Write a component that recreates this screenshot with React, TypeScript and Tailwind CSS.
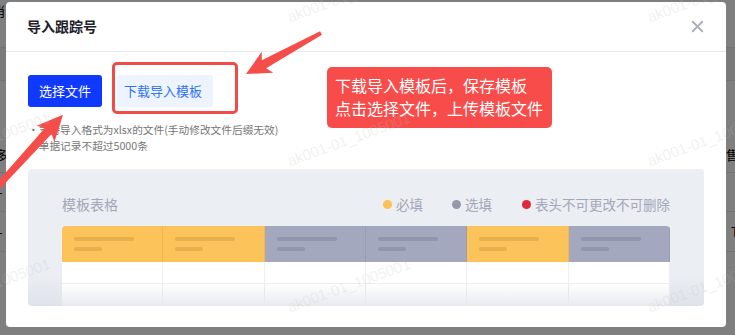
import { X } from 'lucide-react'

const headerCols = ['yellow', 'yellow', 'gray', 'gray', 'yellow', 'gray']

const watermarks = [
  'left-[-68px] top-[6px]',
  'left-[292px] top-[6px]',
  'left-[652px] top-[6px]',
  'left-[-68px] top-[150px]',
  'left-[292px] top-[150px]',
  'left-[652px] top-[150px]',
  'left-[-68px] top-[296px]',
  'left-[292px] top-[296px]',
  'left-[652px] top-[296px]',
]

function Arrows() {
  return (
    <svg className="pointer-events-none absolute inset-0" width="735" height="335" viewBox="0 0 735 335">
      {/* arrow pointing at the download button */}
      <g transform="translate(321 33) rotate(151.3)">
        <polygon points="0,-2 65,-4.5 61,-12 85.5,0 61,12 65,4.5 0,2" fill="#f54d4a" />
      </g>
      {/* arrow pointing at the select button */}
      <g transform="translate(-11 196) rotate(-47.7)">
        <polygon points="0,-3 88,-4.5 84,-12 110,0 84,12 88,4.5 0,3" fill="#f54d4a" />
      </g>
    </svg>
  )
}

function TemplatePreview() {
  return (
    <div className="mt-[15px] h-[137px] overflow-hidden rounded-[4px] bg-[linear-gradient(to_bottom,#ebeef3_78%,#dee2ea)] px-[34px] pt-[25px]">
      <div className="flex h-[20px] items-center justify-between">
        <span className="text-[14px] text-[#a3a7b7]">模板表格</span>
        <div className="flex items-center text-[13.5px] text-[#a3a7b7]">
          <span className="h-[9px] w-[9px] rounded-full bg-[#fcc253]" />
          <span className="ml-[4px]">必填</span>
          <span className="ml-[29px] h-[9px] w-[9px] rounded-full bg-[#9598ab]" />
          <span className="ml-[4px]">选填</span>
          <span className="ml-[30px] h-[9px] w-[9px] rounded-full bg-[#e0283c]" />
          <span className="ml-[4px]">表头不可更改不可删除</span>
        </div>
      </div>
      <div className="mt-[12px] overflow-hidden rounded-t-[4px]">
        <div className="grid h-[36px] grid-cols-6">
          {headerCols.map((c, i) => (
            <div
              key={i}
              className={
                c === 'yellow'
                  ? 'border-r border-[#f0b950] bg-[#fcc35a] pl-[12px] pt-[11px]'
                  : 'border-r border-[#9a9eb4] bg-[#a4a8be] pl-[12px] pt-[11px]'
              }
            >
              <div className={c === 'yellow' ? 'h-[4px] w-[60px] rounded-full bg-[#e6b04f]' : 'h-[4px] w-[60px] rounded-full bg-[#9296ac]'} />
              <div className={c === 'yellow' ? 'mt-[6px] h-[4px] w-[28px] rounded-full bg-[#e6b04f]' : 'mt-[6px] h-[4px] w-[28px] rounded-full bg-[#9296ac]'} />
            </div>
          ))}
        </div>
        <div className="grid h-[22px] grid-cols-6 border-b border-[#eeeeee] bg-white">
          {headerCols.map((_, i) => (
            <div key={i} className="border-r border-[#eeeeee]" />
          ))}
        </div>
        <div className="grid h-[22px] grid-cols-6 bg-gradient-to-b from-white to-[#e9eaef]">
          {headerCols.map((_, i) => (
            <div key={i} className="border-r border-[#e9e9ec]" />
          ))}
        </div>
      </div>
    </div>
  )
}

export default function App() {
  return (
    <div className="relative h-[335px] w-[735px] overflow-hidden bg-white font-['Noto_Sans_CJK_SC',sans-serif]">
      {/* page behind the dialog */}
      <div className="flex flex-col text-[13px] text-black">
        <div className="flex h-[48px] justify-between border-b border-[#e6e6e6]">
          <span className="ml-[-7px] mt-[1px]">肖</span>
          <span />
        </div>
        <div className="h-[33px] border-b border-[#e6e6e6] bg-[#f4f5f7]" />
        <div className="flex h-[92px] items-end justify-between border-b border-[#e6e6e6] pb-[8px]">
          <span className="ml-[-5px]">多</span>
          <span className="mr-[-4px]">售</span>
        </div>
        <div className="flex h-[39px] items-center border-b border-[#e6e6e6]">
          <span className="ml-[-2px]">-</span>
        </div>
        <div className="flex h-[40px] items-center justify-between border-b border-[#e6e6e6]">
          <span className="ml-[-2px]">-</span>
          <span className="mr-[-26px]">Total</span>
        </div>
      </div>
      <div className="absolute inset-0 bg-black/50" />

      {/* dialog */}
      <div className="absolute left-[6px] top-[2px] h-[325px] w-[720px] rounded-[4px] bg-white">
        <div className="flex h-[50px] items-center justify-between border-b border-[#e6e8ec] pl-[21px] pr-[19px]">
          <span className="text-[14px] font-bold text-[#1d2129]">导入跟踪号</span>
          <X size={19} strokeWidth={2.4} className="text-[#a9b0bd]" />
        </div>
        <div className="px-[22px] pt-[23px]">
          <div className="flex items-center gap-[15px]">
            <button className="h-[32px] w-[74px] rounded-[3px] bg-[#0f39ff] text-[13px] text-white">选择文件</button>
            <button className="h-[32px] w-[96px] rounded-[3px] bg-[#eef4ff] pr-[4px] text-[13px] text-[#2f73f0]">下载导入模板</button>
          </div>
          <div className="mt-[15px] text-[10.7px] leading-[16px] text-[#767676]">
            <p>•支持导入格式为xlsx的文件(手动修改文件后缀无效)</p>
            <p>•单据记录不超过5000条</p>
          </div>
          <TemplatePreview />
        </div>

        {/* annotations */}
        <div className="absolute left-[106px] top-[60px] h-[52px] w-[126px] rounded-[5px] border-[3px] border-[#f04b48]" />
        <div className="absolute left-[321px] top-[65px] h-[61px] w-[225px] rounded-[5px] bg-[#f84c4a] px-[8px] py-[7px] text-[16px] leading-[23px] text-white">
          <p>下载导入模板后，保存模板</p>
          <p>点击选择文件，上传模板文件</p>
        </div>
      </div>

      <Arrows />

      {watermarks.map((pos, i) => (
        <span
          key={i}
          className={`pointer-events-none absolute origin-bottom-left -rotate-[20deg] whitespace-nowrap font-['Liberation_Sans',sans-serif] text-[15px] text-[rgba(190,190,190,0.22)] ${pos}`}
        >
          ak001-01_1005001
        </span>
      ))}
    </div>
  )
}
